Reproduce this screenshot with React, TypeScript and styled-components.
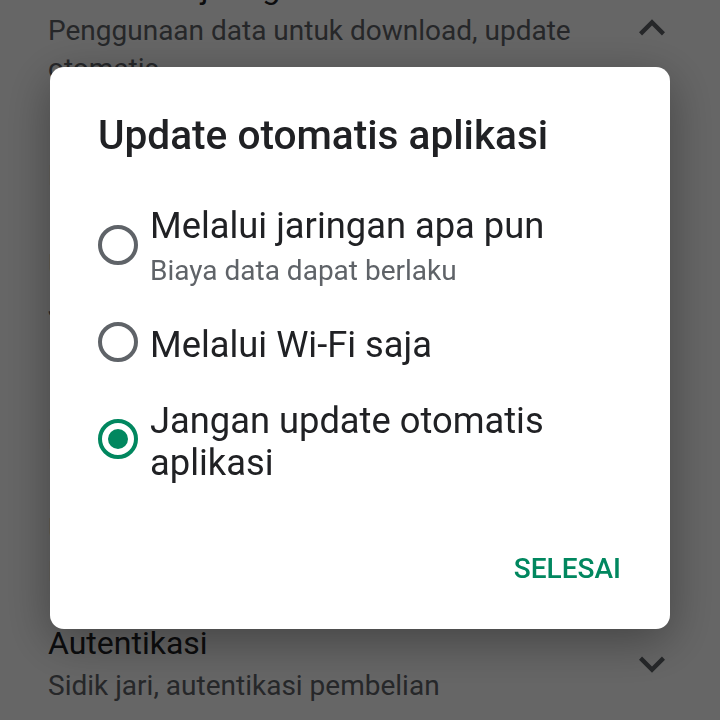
import { useState } from "react";
import styled, { createGlobalStyle } from "styled-components";

const GlobalStyle = createGlobalStyle`
  * {
    box-sizing: border-box;
  }
  body {
    margin: 0;
    background: #fff;
    font-family: Roboto, "Noto Sans", sans-serif;
    overflow: hidden;
  }
`;

type Option = {
  id: string;
  label: string;
  hint?: string;
};

const options: Option[] = [
  { id: "any", label: "Melalui jaringan apa pun", hint: "Biaya data dapat berlaku" },
  { id: "wifi", label: "Melalui Wi-Fi saja" },
  { id: "never", label: "Jangan update otomatis aplikasi" },
];

// Material expand_less / expand_more
const Chevron = ({ up }: { up?: boolean }) => (
  <ChevronIcon viewBox="0 0 24 24" $up={up}>
    <path d="M7.41 15.41L12 10.83l4.59 4.58L18 14l-6-6-6 6z" />
  </ChevronIcon>
);

const App = () => {
  const [selected, setSelected] = useState("never");

  return (
    <>
      <GlobalStyle />
      <SettingsList>
        <SettingRow $pad="0">
          <SettingText>
            <SettingTitle>Preferensi jaringan</SettingTitle>
            <SettingSub>Penggunaan data untuk download, update otomatis</SettingSub>
          </SettingText>
          <Chevron up />
        </SettingRow>
        <SettingRow $pad="25px 0">
          <SettingText>
            <SettingTitle>Preferensi download aplikasi</SettingTitle>
            <SettingSub>Melalui jaringan apa pun</SettingSub>
          </SettingText>
        </SettingRow>
        <SettingRow $pad="25px 0">
          <SettingText>
            <SettingTitle>Update otomatis aplikasi</SettingTitle>
            <SettingSub>Jangan update otomatis aplikasi</SettingSub>
          </SettingText>
        </SettingRow>
        <SettingRow $pad="25px 0">
          <SettingText>
            <SettingTitle>Putar otomatis video</SettingTitle>
            <SettingSub>Putar otomatis video hanya melalui Wi-Fi</SettingSub>
          </SettingText>
        </SettingRow>
        <SettingRow $pad="25px 0">
          <SettingText>
            <SettingTitle>Umum</SettingTitle>
            <SettingSub>Preferensi akun dan perangkat</SettingSub>
          </SettingText>
        </SettingRow>
        <SettingRow $pad="7px 0 2px">
          <SettingText>
            <SettingTitle>Autentikasi</SettingTitle>
            <SettingSub>Sidik jari, autentikasi pembelian</SettingSub>
          </SettingText>
          <Chevron />
        </SettingRow>
      </SettingsList>

      <Scrim>
        <Dialog>
          <DialogTitle>Update otomatis aplikasi</DialogTitle>
          <OptionList>
            {options.map((o) => (
              <OptionRow key={o.id} onClick={() => setSelected(o.id)}>
                <Radio $checked={selected === o.id} />
                <OptionText>
                  <OptionLabel>{o.label}</OptionLabel>
                  {o.hint && <OptionHint>{o.hint}</OptionHint>}
                </OptionText>
              </OptionRow>
            ))}
          </OptionList>
          <Actions>
            <TextButton>SELESAI</TextButton>
          </Actions>
        </Dialog>
      </Scrim>
    </>
  );
};

export default App;

const SettingsList = styled.div`
  margin-top: -32px;
  display: flex;
  flex-direction: column;
`;

const SettingRow = styled.div<{ $pad: string }>`
  display: flex;
  align-items: center;
  gap: 24px;
  padding: ${({ $pad }) => $pad};
  padding-left: 48px;
  padding-right: 42px;
`;

const SettingText = styled.div`
  flex: 1;
  display: flex;
  flex-direction: column;
`;

const SettingTitle = styled.div`
  font-size: 32px;
  line-height: 40px;
  color: #202124;
`;

const SettingSub = styled.div`
  margin-top: 4px;
  font-size: 28px;
  line-height: 38px;
  color: #5f6368;
`;

const ChevronIcon = styled.svg<{ $up?: boolean }>`
  width: 52px;
  height: 52px;
  flex-shrink: 0;
  fill: #5f6368;
  transform: ${({ $up }) => ($up ? "none" : "rotate(180deg)")};
`;

const Scrim = styled.div`
  position: fixed;
  inset: 0;
  background: rgba(0, 0, 0, 0.6);
  display: flex;
  justify-content: center;
  align-items: flex-start;
  padding-top: 67px;
`;

const Dialog = styled.div`
  width: 620px;
  background: #fff;
  border-radius: 14px;
  padding: 42px 0 24px;
  box-shadow: 0 12px 48px rgba(0, 0, 0, 0.35);
`;

const DialogTitle = styled.h2`
  margin: 0;
  padding: 0 48px;
  font-size: 40.6px;
  line-height: 52px;
  font-weight: 500;
  color: #202124;
`;

const OptionList = styled.div`
  margin-top: 38px;
  padding: 0 48px;
  display: flex;
  flex-direction: column;
`;

const OptionRow = styled.label`
  min-height: 97px;
  display: flex;
  align-items: center;
  gap: 12px;
  cursor: pointer;
`;

const Radio = styled.span<{ $checked: boolean }>`
  position: relative;
  width: 40px;
  height: 40px;
  flex-shrink: 0;
  margin-bottom: 5px;
  border-radius: 50%;
  border: 4px solid ${({ $checked }) => ($checked ? "#01875f" : "#5f6368")};

  &::after {
    content: "";
    position: absolute;
    inset: 6px;
    border-radius: 50%;
    background: #01875f;
    display: ${({ $checked }) => ($checked ? "block" : "none")};
  }
`;

const OptionText = styled.div`
  display: flex;
  flex-direction: column;
`;

const OptionLabel = styled.div`
  font-size: 36.3px;
  line-height: 42px;
  color: #202124;
`;

const OptionHint = styled.div`
  margin-top: 5px;
  font-size: 28px;
  line-height: 38px;
  color: #5f6368;
`;

const Actions = styled.div`
  margin-top: 43px;
  display: flex;
  justify-content: flex-end;
  padding-right: 33px;
`;

const TextButton = styled.button`
  height: 72px;
  padding: 0 16px;
  border: none;
  background: none;
  font-family: Roboto, sans-serif;
  font-size: 28px;
  line-height: 36px;
  font-weight: 500;
  color: #01875f;
  cursor: pointer;
`;
